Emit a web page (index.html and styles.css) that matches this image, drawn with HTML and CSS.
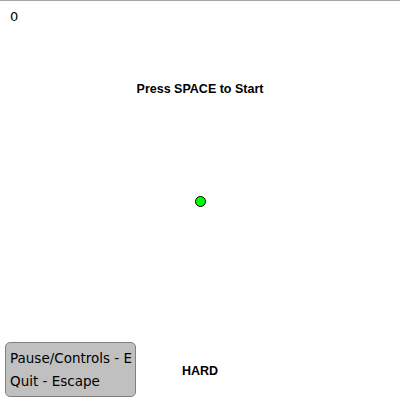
FILE: index.html
```html
<!DOCTYPE html>
<html>
<head>
<meta charset="utf-8">
<link rel="stylesheet" href="styles.css">
</head>
<body>
<div class="game">
  <div class="score">0</div>
  <div class="title">Press SPACE to Start</div>
  <div class="ball"></div>
  <div class="bottom">
    <div class="help">
      <div>Pause/Controls - E</div>
      <div>Quit - Escape</div>
    </div>
    <div class="mode">HARD</div>
  </div>
</div>
</body>
</html>
```
FILE: styles.css
```css
html, body {
  margin: 0;
  padding: 0;
  background: #ffffff;
}
.game {
  position: relative;
  width: 400px;
  height: 400px;
  box-sizing: border-box;
  border-top: 1px solid #a6a6a6;
  display: flex;
  flex-direction: column;
  font-family: "DejaVu Sans", "Liberation Sans", sans-serif;
  font-size: 13px;
  color: #000;
}
.score {
  padding: 8px 0 0 10px;
  line-height: 15px;
}
.title {
  margin-top: 58px;
  text-align: center;
  font-family: "Liberation Sans", sans-serif;
  font-size: 12.5px;
  font-weight: bold;
  line-height: 15px;
}
.ball {
  position: absolute;
  left: 195px;
  top: 195px;
  width: 9px;
  height: 9px;
  border: 1px solid #000;
  border-radius: 50%;
  background: #00ff00;
}
.bottom {
  margin-top: auto;
  display: flex;
  align-items: center;
  padding: 0 0 3px 5px;
}
.help {
  width: 131px;
  height: 55px;
  box-sizing: border-box;
  background: #c0c0c0;
  border: 1px solid #808080;
  border-radius: 5px;
  padding: 4px 0 0 4px;
  font-size: 13.5px;
  line-height: 23px;
}
.mode {
  margin-left: 34px;
  width: 60px;
  text-align: center;
  font-family: "Liberation Sans", sans-serif;
  font-size: 12.5px;
  font-weight: bold;
  padding-top: 2px;
}
```
